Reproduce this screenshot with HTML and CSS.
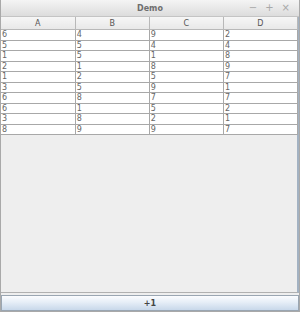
FILE: index.html
```html
<!DOCTYPE html>
<html lang="en">
<head>
    <meta charset="UTF-8">
    <title>Demo</title>
    <link rel="stylesheet" href="styles.css">
</head>
<body>
    <div class="window">
        <div class="titlebar">
            <span class="title">Demo</span>
            <div class="controls">
                <span>&#8722;</span>
                <span>+</span>
                <span>&#215;</span>
            </div>
        </div>
        <div class="content">
            <table class="grid">
                <thead>
                    <tr><th>A</th><th>B</th><th>C</th><th>D</th></tr>
                </thead>
                <tbody>
                    <tr><td>6</td><td>4</td><td>9</td><td>2</td></tr>
                    <tr><td>5</td><td>5</td><td>4</td><td>4</td></tr>
                    <tr><td>1</td><td>5</td><td>1</td><td>8</td></tr>
                    <tr><td>2</td><td>1</td><td>8</td><td>9</td></tr>
                    <tr><td>1</td><td>2</td><td>5</td><td>7</td></tr>
                    <tr><td>3</td><td>5</td><td>9</td><td>1</td></tr>
                    <tr><td>6</td><td>8</td><td>7</td><td>7</td></tr>
                    <tr><td>6</td><td>1</td><td>5</td><td>2</td></tr>
                    <tr><td>3</td><td>8</td><td>2</td><td>1</td></tr>
                    <tr><td>8</td><td>9</td><td>9</td><td>7</td></tr>
                </tbody>
            </table>
        </div>
        <button class="add-btn">+1</button>
    </div>
</body>
</html>
```

FILE: styles.css
```css
body {
    margin: 0;
    font-family: 'DejaVu Sans', sans-serif;
    background: #ffffff;
}
.window {
    width: 300px;
    height: 312px;
    box-sizing: border-box;
    display: flex;
    flex-direction: column;
    background: #eeeeee;
    border: 1px solid #a9a9a9;
    border-top: none;
}
.titlebar {
    height: 16px;
    flex: none;
    display: flex;
    align-items: center;
    justify-content: center;
    position: relative;
    background: linear-gradient(#f4f4f4, #dcdcdc);
    border-bottom: 1px solid #c4c4c4;
}
.title {
    font-size: 8px;
    font-weight: bold;
    color: #6e6e6e;
    padding-top: 1px;
}
.controls {
    position: absolute;
    right: 9px;
    top: 2px;
    display: flex;
    gap: 8px;
    font-size: 10px;
    color: #a8a8a8;
}
.content {
    flex: 1;
    background: #eeeeee;
    border-right: 2px solid #a3b2c2;
    border-bottom: 1px solid #b0b0b0;
}
.grid {
    width: 297px;
    border-collapse: collapse;
    table-layout: fixed;
    font-size: 8px;
    color: #666666;
}
.grid th {
    height: 12px;
    padding: 0;
    font-weight: normal;
    color: #555555;
    background: linear-gradient(#f6f6f6, #e8e8e8);
    border-right: 1px solid #b8b8b8;
    border-bottom: 1px solid #b8b8b8;
}
.grid td {
    height: 9.5px;
    padding: 0 0 0 1px;
    line-height: 9px;
    background: #ffffff;
    border-right: 1px solid #a8a8a8;
    border-bottom: 1px solid #a8a8a8;
}
.add-btn {
    flex: none;
    height: 16px;
    margin: 2px 0 0;
    padding: 0;
    font-family: 'DejaVu Sans', sans-serif;
    font-size: 8px;
    font-weight: bold;
    color: #444444;
    border: 1px solid #9aa6b2;
    background: linear-gradient(#fbfcfe, #e6eef7 45%, #c8d8ea);
}
```
